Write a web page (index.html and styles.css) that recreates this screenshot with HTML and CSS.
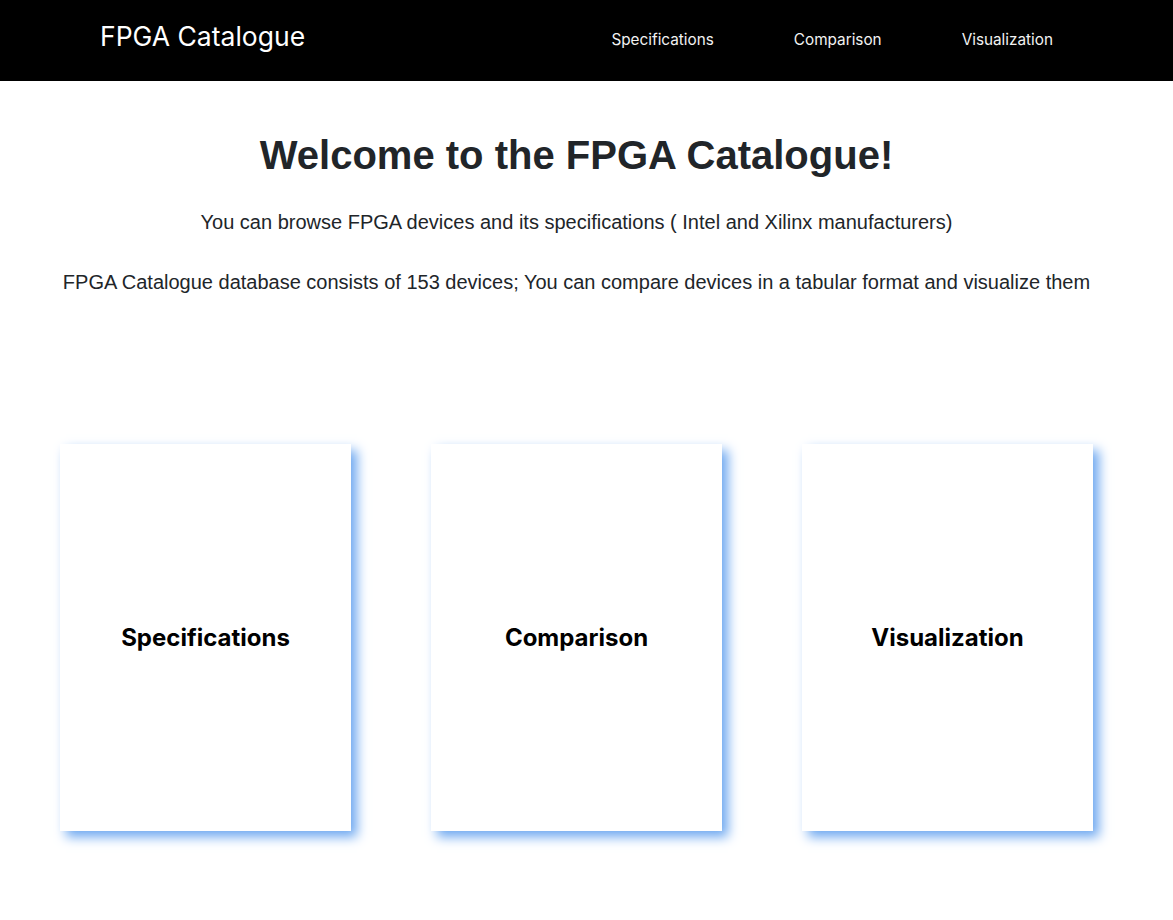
FILE: index.html
```html
<!DOCTYPE html>
<html lang="en">
<head>
<meta charset="utf-8">
<title>FPGA Catalogue</title>
<link rel="stylesheet" href="styles.css">
</head>
<body>
<header class="navbar">
  <div class="navbar-inner">
    <a class="brand" href="#">FPGA Catalogue</a>
    <nav class="nav-links">
      <a href="#">Specifications</a>
      <a href="#">Comparison</a>
      <a href="#">Visualization</a>
    </nav>
  </div>
</header>
<main class="main">
  <section class="intro">
    <h1 class="title">Welcome to the FPGA Catalogue!</h1>
    <p class="lead">You can browse FPGA devices and its specifications ( Intel and Xilinx manufacturers)</p>
    <p class="lead">FPGA Catalogue database consists of 153 devices; You can compare devices in a tabular format and visualize them</p>
  </section>
  <section class="cards">
    <a class="card" href="#">Specifications</a>
    <a class="card" href="#">Comparison</a>
    <a class="card" href="#">Visualization</a>
  </section>
</main>
</body>
</html>
```
FILE: styles.css
```css
* { box-sizing: border-box; }
html, body { margin: 0; padding: 0; background: #fff; }
body { font-family: "Liberation Sans", Arial, sans-serif; color: #212529; }
a { text-decoration: none; }

.navbar { background: #000; height: 81px; }
.navbar-inner {
  width: 1153px;
  height: 100%;
  padding: 0 100px;
  display: flex;
  align-items: center;
  justify-content: space-between;
}
.brand {
  font-family: Inter, "Noto Sans", sans-serif;
  font-size: 26.5px;
  color: #fff;
  margin-top: -10px;
}
.nav-links { display: flex; gap: 80px; margin-top: -2px; }
.nav-links a {
  font-family: Inter, "Noto Sans", sans-serif;
  font-size: 15.3px;
  color: #f2f2f2;
}

.main { width: 1153px; padding-bottom: 90px; }
.intro { text-align: center; padding-top: 50px; }
.title { font-size: 40px; font-weight: 700; margin: 0 0 31px; line-height: 48px; }
.lead { font-size: 20px; margin: 0 0 36px; line-height: 24px; }

.cards {
  display: flex;
  gap: 80px;
  padding: 0 60px;
  margin-top: 150px;
}
.card {
  width: 291px;
  height: 387px;
  background: #fff;
  display: flex;
  align-items: center;
  justify-content: center;
  font-family: Inter, "Noto Sans", sans-serif;
  font-weight: 700;
  font-size: 24px;
  color: #000;
  box-shadow: 6px 6px 11px rgb(110, 168, 240);
}
```
